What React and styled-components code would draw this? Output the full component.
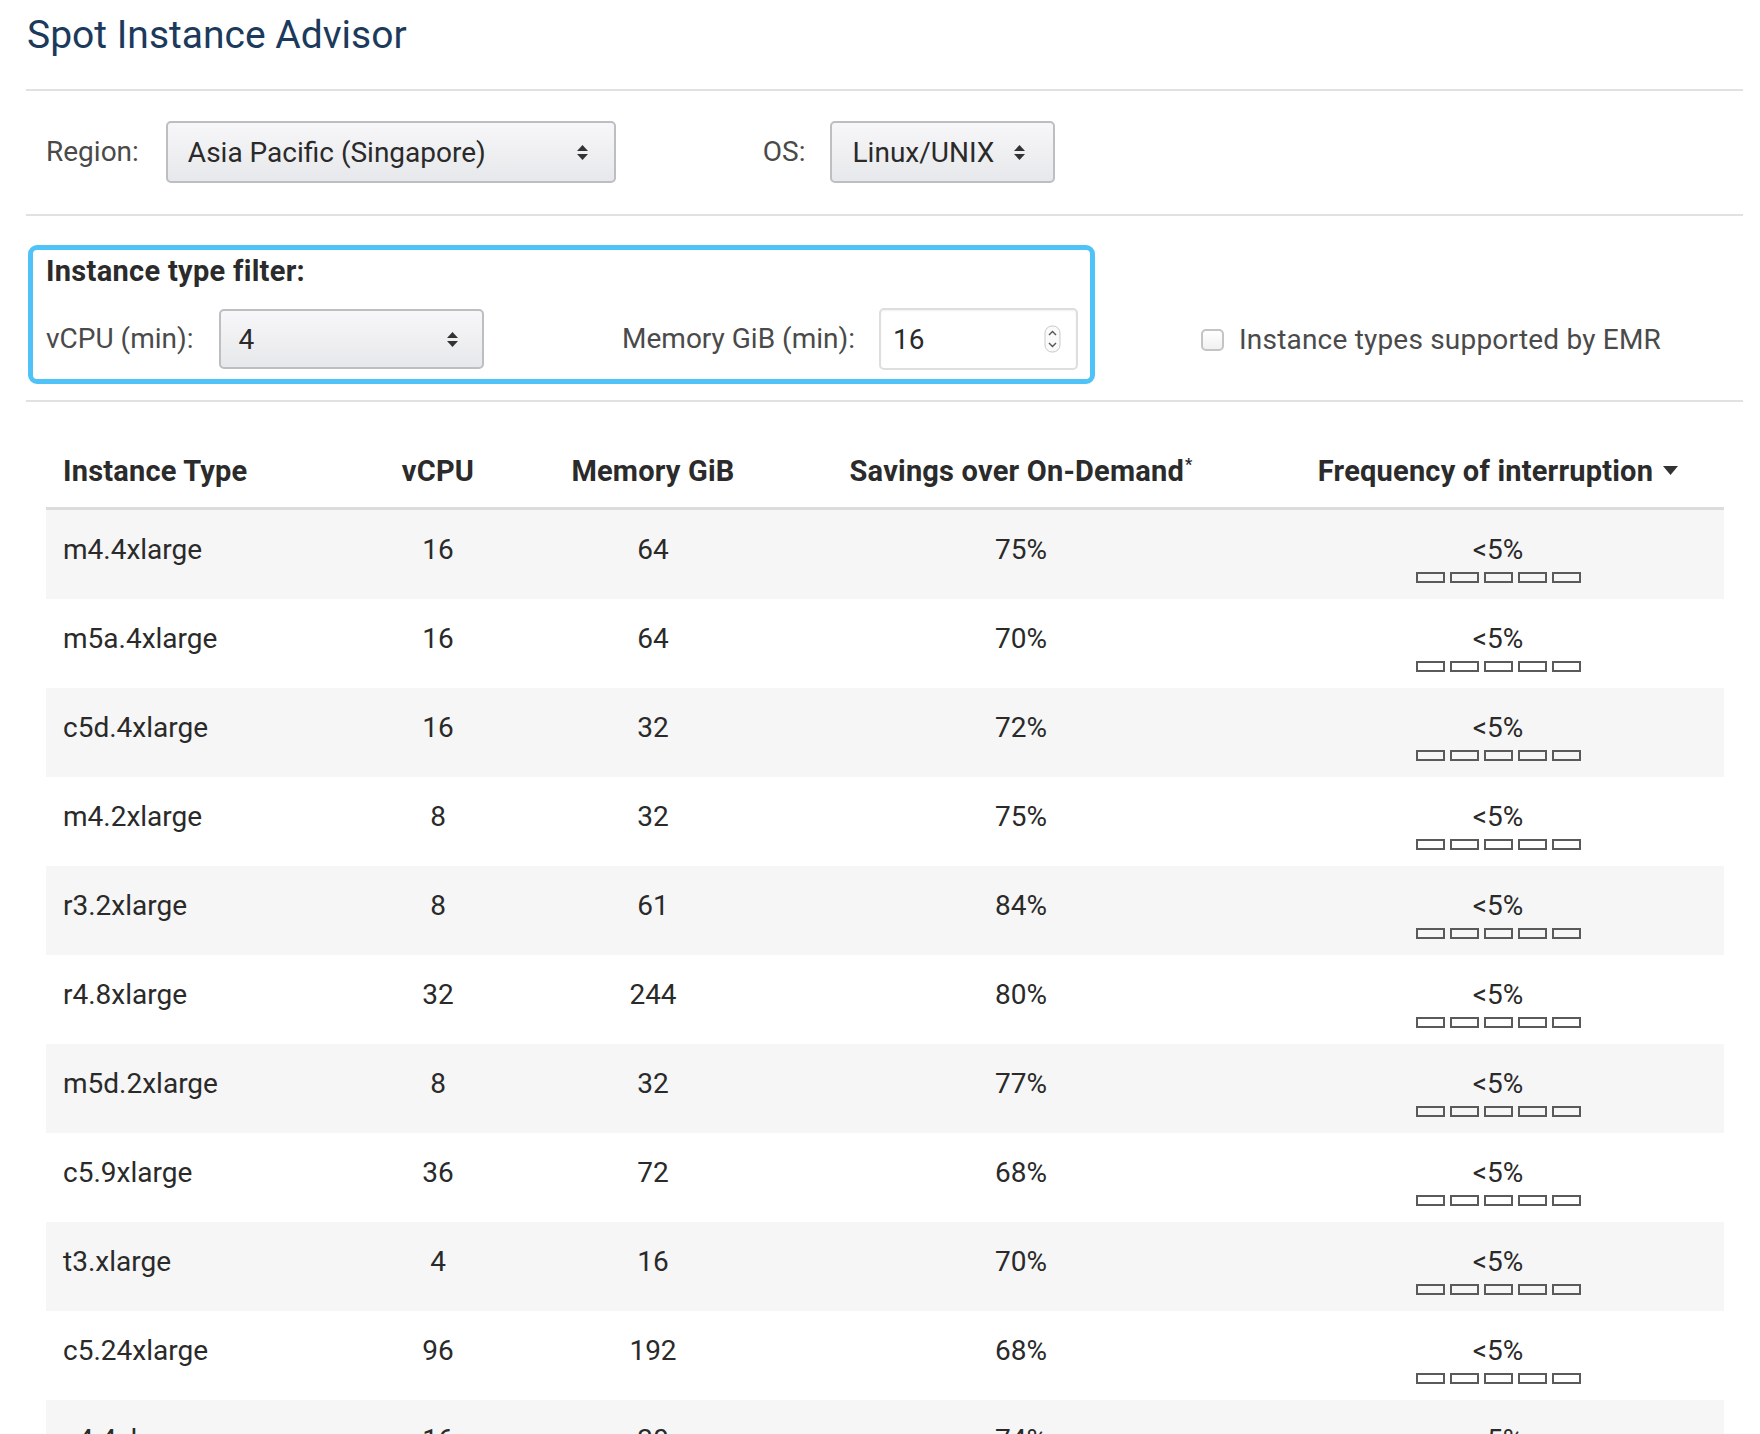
import styled, { createGlobalStyle } from "styled-components";

const GlobalStyle = createGlobalStyle`
  html, body {
    margin: 0;
    padding: 0;
    background: #ffffff;
  }
  body {
    font-family: Roboto, "Liberation Sans", Arial, sans-serif;
    color: #333333;
  }
  * {
    box-sizing: border-box;
  }
`;

const Page = styled.div`
  padding: 13px 17px 0 26px;
  width: 1760px;
`;

const Title = styled.h1`
  margin: 0;
  font-size: 39px;
  line-height: 44px;
  font-weight: 400;
  color: #1b3a5c;
  padding-left: 1px;
`;

const Divider = styled.div`
  height: 2px;
  background: #e1e1e1;
  margin-top: ${(p) => p.$top || 0}px;
`;

const ControlsRow = styled.div`
  display: flex;
  align-items: center;
  padding: 30px 0 31px 20px;
`;

const Label = styled.span`
  font-size: 28px;
  line-height: 34px;
  color: #4a4a4a;
  margin-right: ${(p) => p.$gap || 24}px;
  margin-left: ${(p) => p.$left || 0}px;
  white-space: nowrap;
`;

const SelectBox = styled.div`
  display: flex;
  align-items: center;
  justify-content: space-between;
  width: ${(p) => p.$width}px;
  height: ${(p) => p.$height || 62}px;
  padding: 0 ${(p) => p.$right || 26}px 0 ${(p) => p.$left || 20}px;
  border: 2px solid #bdbec2;
  border-radius: 5px;
  background: linear-gradient(#f7f7f9, #e7e8eb);
  font-size: 28px;
  color: #2a2a2a;
  white-space: nowrap;
`;

const NumberBox = styled.div`
  display: flex;
  align-items: center;
  justify-content: space-between;
  width: 199px;
  height: 62px;
  padding: 0 15px 0 12px;
  border: 2px solid #dedede;
  border-radius: 5px;
  background: #ffffff;
  box-shadow: inset 0 1px 2px rgba(0, 0, 0, 0.06);
  font-size: 28px;
  color: #2a2a2a;
`;

const FilterSection = styled.div`
  display: flex;
  align-items: flex-end;
  padding: 29px 0 16px 2px;
`;

const FilterBox = styled.div`
  width: 1067px;
  border: 5px solid #4fc3f7;
  border-radius: 9px;
  padding: 4px 12px 9px 13px;
`;

const FilterTitle = styled.div`
  font-size: 29px;
  line-height: 34px;
  font-weight: 700;
  letter-spacing: 0.3px;
  color: #2b2b2b;
`;

const FilterRow = styled.div`
  display: flex;
  align-items: center;
  margin-top: 20px;
`;

const Group = styled.div`
  display: flex;
  align-items: center;
  margin-left: ${(p) => (p.$push ? "auto" : "0")};
`;

const CheckLabel = styled.label`
  display: flex;
  align-items: center;
  margin: 0 0 27px 106px;
  font-size: 28px;
  line-height: 34px;
  color: #4a4a4a;
  letter-spacing: 0.2px;
  white-space: nowrap;
`;

const CheckBox = styled.span`
  width: 23px;
  height: 22px;
  border: 2px solid #c4c4c4;
  border-radius: 5px;
  background: linear-gradient(#ffffff, #f1f1f1);
  margin-right: 15px;
`;

const Table = styled.div`
  margin: 0 19px 0 20px;
`;

const columns = "294px 196px 234px 502px 1fr";

const HeadRow = styled.div`
  display: grid;
  grid-template-columns: ${columns};
  padding: 51px 0 16px;
  border-bottom: 3px solid #dcdcdc;
`;

const HeadCell = styled.div`
  font-size: 29px;
  line-height: 36px;
  font-weight: 700;
  letter-spacing: 0.2px;
  color: #2b2b2b;
  text-align: ${(p) => (p.$left ? "left" : "center")};
  padding-left: ${(p) => (p.$left ? "17px" : "0")};
  white-space: nowrap;
`;

const Star = styled.sup`
  font-size: 16px;
  vertical-align: top;
  position: relative;
  top: -6px;
  margin-left: 1px;
`;

const SortArrow = styled.span`
  display: inline-block;
  margin-left: 10px;
  vertical-align: middle;
  position: relative;
  top: -8px;
`;

const Row = styled.div`
  display: grid;
  grid-template-columns: ${columns};
  height: 89px;
  padding-top: 23px;
  background: ${(p) => (p.$odd ? "#f6f6f6" : "#ffffff")};
`;

const Cell = styled.div`
  font-size: 28px;
  line-height: 34px;
  color: #2a2a2a;
  text-align: ${(p) => (p.$left ? "left" : "center")};
  padding-left: ${(p) => (p.$left ? "17px" : "0")};
  white-space: nowrap;
`;

const FreqCell = styled.div`
  display: flex;
  flex-direction: column;
  align-items: center;
  font-size: 28px;
  line-height: 34px;
  color: #2a2a2a;
`;

const Bars = styled.div`
  display: flex;
  gap: 5px;
  margin-top: 5px;
`;

const Bar = styled.span`
  width: 29px;
  height: 11px;
  border: 2px solid #5a5a5a;
  background: ${(p) => (p.$on ? "#5a5a5a" : "transparent")};
`;

function UpDown() {
  return (
    <svg width="11" height="15" viewBox="0 0 11 15">
      <path d="M0 6 L5.5 0 L11 6 Z" fill="#333" />
      <path d="M0 9 L5.5 15 L11 9 Z" fill="#333" />
    </svg>
  );
}

function Spinner() {
  return (
    <svg width="17" height="28" viewBox="0 0 17 28">
      <rect x="1" y="1" width="15" height="26" rx="7" fill="#fafafa" stroke="#c9c9c9" />
      <path d="M5 10 L8.5 6.5 L12 10" fill="none" stroke="#555" strokeWidth="1.4" />
      <path d="M5 18 L8.5 21.5 L12 18" fill="none" stroke="#555" strokeWidth="1.4" />
    </svg>
  );
}

function Caret() {
  return (
    <svg width="15" height="9" viewBox="0 0 15 9">
      <path d="M0 0 L15 0 L7.5 9 Z" fill="#333" />
    </svg>
  );
}

const instances = [
  ["m4.4xlarge", 16, 64, "75%"],
  ["m5a.4xlarge", 16, 64, "70%"],
  ["c5d.4xlarge", 16, 32, "72%"],
  ["m4.2xlarge", 8, 32, "75%"],
  ["r3.2xlarge", 8, 61, "84%"],
  ["r4.8xlarge", 32, 244, "80%"],
  ["m5d.2xlarge", 8, 32, "77%"],
  ["c5.9xlarge", 36, 72, "68%"],
  ["t3.xlarge", 4, 16, "70%"],
  ["c5.24xlarge", 96, 192, "68%"],
  ["c4.4xlarge", 16, 30, "74%"],
];

export default function App() {
  return (
    <Page>
      <GlobalStyle />
      <Title>Spot Instance Advisor</Title>
      <Divider $top={32} />

      <ControlsRow>
        <Label $gap={27}>Region:</Label>
        <SelectBox $width={450}>
          <span>Asia Pacific (Singapore)</span>
          <UpDown />
        </SelectBox>
        <Label $left={147}>OS:</Label>
        <SelectBox $width={225} $left={21} $right={28}>
          <span>Linux/UNIX</span>
          <UpDown />
        </SelectBox>
      </ControlsRow>
      <Divider />

      <FilterSection>
        <FilterBox>
          <FilterTitle>Instance type filter:</FilterTitle>
          <FilterRow>
            <Group>
              <Label $gap={25}>vCPU (min):</Label>
              <SelectBox $width={265} $height={60} $left={18} $right={24}>
                <span>4</span>
                <UpDown />
              </SelectBox>
            </Group>
            <Group $push>
              <Label $gap={24}>Memory GiB (min):</Label>
              <NumberBox>
                <span>16</span>
                <Spinner />
              </NumberBox>
            </Group>
          </FilterRow>
        </FilterBox>
        <CheckLabel>
          <CheckBox />
          Instance types supported by EMR
        </CheckLabel>
      </FilterSection>
      <Divider />

      <Table>
        <HeadRow>
          <HeadCell $left>Instance Type</HeadCell>
          <HeadCell>vCPU</HeadCell>
          <HeadCell>Memory GiB</HeadCell>
          <HeadCell>
            Savings over On-Demand<Star>*</Star>
          </HeadCell>
          <HeadCell>
            Frequency of interruption
            <SortArrow>
              <Caret />
            </SortArrow>
          </HeadCell>
        </HeadRow>
        {instances.map(([type, cpu, mem, save], i) => (
          <Row key={type} $odd={i % 2 === 0}>
            <Cell $left>{type}</Cell>
            <Cell>{cpu}</Cell>
            <Cell>{mem}</Cell>
            <Cell>{save}</Cell>
            <FreqCell>
              <span>&lt;5%</span>
              <Bars>
                {[0, 1, 2, 3, 4].map((b) => (
                  <Bar key={b} />
                ))}
              </Bars>
            </FreqCell>
          </Row>
        ))}
      </Table>
    </Page>
  );
}
